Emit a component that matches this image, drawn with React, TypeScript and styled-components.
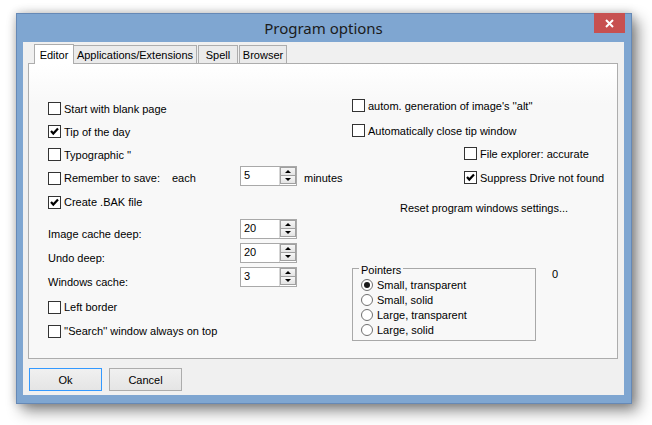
import React from 'react';
import styled, { createGlobalStyle } from 'styled-components';

const GlobalStyle = createGlobalStyle`
  html, body {
    margin: 0;
    padding: 0;
    background: #fff;
  }
  body {
    font-family: "Liberation Sans", Arial, sans-serif;
    font-size: 11px;
    line-height: 14px;
    color: #000;
  }
  * {
    box-sizing: border-box;
  }
`;

const Desk = styled.div`
  width: 652px;
  height: 425px;
  padding: 13px 0 0 16px;
  overflow: hidden;
`;

const Window = styled.div`
  width: 616px;
  height: 391px;
  display: flex;
  flex-direction: column;
  background: #7fa6d1;
  border: 1px solid #6689b6;
  padding: 0 7px 8px 6px;
  box-shadow: 6px 7px 14px rgba(0, 0, 0, 0.45), 0 0 9px rgba(0, 0, 0, 0.22);
`;

const TitleBar = styled.div`
  height: 28px;
  flex: none;
  display: grid;
  grid-template-columns: 1fr auto 1fr;
  align-items: center;
`;

const Title = styled.div`
  grid-column: 2;
  font-family: "Segoe UI", "Noto Sans", sans-serif;
  font-size: 15px;
  color: #1b1b1b;
`;

const CloseButton = styled.div`
  grid-column: 3;
  justify-self: end;
  align-self: start;
  width: 31px;
  height: 20px;
  margin: -1px -1px 0 0;
  background: #c75050;
  display: flex;
  align-items: center;
  justify-content: center;
`;

const Client = styled.div`
  flex: 1;
  background: #f0f0f0;
  padding: 2px 6px 4px 5px;
  display: flex;
  flex-direction: column;
`;

const TabStrip = styled.div`
  height: 19px;
  display: flex;
  align-items: flex-end;
  padding-left: 6px;
`;

const Tab = styled.div<{ $active?: boolean; $w: number }>`
  width: ${(p) => p.$w}px;
  height: ${(p) => (p.$active ? 20 : 18)}px;
  margin-bottom: ${(p) => (p.$active ? -1 : 0)}px;
  margin-right: ${(p) => (p.$active ? -1 : 1)}px;
  border: 1px solid #adadad;
  border-bottom: none;
  background: ${(p) => (p.$active ? '#fff' : '#ebebeb')};
  display: flex;
  align-items: center;
  justify-content: center;
  position: relative;
  z-index: ${(p) => (p.$active ? 1 : 0)};
`;

const Page = styled.div`
  height: 296px;
  border: 1px solid #adadad;
  background: linear-gradient(#fff, #f8f8f8 40px);
  display: grid;
  grid-template-columns: 323px 1fr;
`;

const LeftCol = styled.div`
  padding: 33px 0 0 19px;
  display: flex;
  flex-direction: column;
`;

const RightCol = styled.div`
  padding-top: 28px;
  display: flex;
  flex-direction: column;
`;

const Row = styled.div<{ $h: number; $mt?: number; $indent?: number }>`
  height: ${(p) => p.$h}px;
  margin-top: ${(p) => p.$mt || 0}px;
  padding-left: ${(p) => p.$indent || 0}px;
  display: flex;
  align-items: center;
  white-space: nowrap;
`;

const SpinRow = styled(Row)`
  align-items: flex-start;
`;

const FieldLabel = styled.div<{ $w: number }>`
  width: ${(p) => p.$w}px;
  margin-top: 8px;
`;

const CheckWrap = styled.label<{ $w?: number }>`
  display: flex;
  align-items: center;
  gap: 3px;
  width: ${(p) => (p.$w ? `${p.$w}px` : 'auto')};
`;

const Box = styled.span`
  width: 13px;
  height: 13px;
  border: 1px solid #333;
  background: #fff;
  display: flex;
  align-items: center;
  justify-content: center;
  flex: none;
`;

const Plain = styled.span<{ $w?: number; $ml?: number }>`
  width: ${(p) => (p.$w ? `${p.$w}px` : 'auto')};
  margin-left: ${(p) => p.$ml || 0}px;
`;

const Spin = styled.div<{ $mt?: number }>`
  width: 57px;
  height: 20px;
  margin-top: ${(p) => p.$mt || 0}px;
  border: 1px solid #a9a9a9;
  background: #fff;
  display: flex;
  justify-content: space-between;
  flex: none;
`;

const SpinValue = styled.span`
  padding: 1px 0 0 3px;
`;

const SpinButtons = styled.div`
  width: 17px;
  margin: 0 0 0 0;
  padding: 0 0 1px 0;
  display: flex;
  flex-direction: column;
  border-left: 1px solid #d5d5d5;
`;

const SpinBtn = styled.div`
  flex: 1;
  border: 1px solid #a0a0a0;
  background: linear-gradient(#f6f6f6, #e4e4e4);
  display: flex;
  align-items: center;
  justify-content: center;
  & + & {
    border-top: none;
  }
`;

const Arrow = styled.span<{ $down?: boolean }>`
  width: 0;
  height: 0;
  border-left: 3px solid transparent;
  border-right: 3px solid transparent;
  ${(p) => (p.$down ? 'border-top: 3px solid #000;' : 'border-bottom: 3px solid #000;')}
`;

const GroupRow = styled.div`
  margin-top: 34px;
  display: flex;
  align-items: flex-start;
`;

const Group = styled.fieldset`
  margin: 0;
  width: 184px;
  padding: 1px 0 3px 8px;
  border: 1px solid #a8a8a8;
`;

const Legend = styled.legend`
  padding: 4px 2px 0;
  margin-left: -2px;
  line-height: 12px;
`;

const RadioRow = styled.label`
  height: 15px;
  display: flex;
  align-items: center;
  gap: 4px;
`;

const RadioCircle = styled.span<{ $on?: boolean }>`
  width: 12px;
  height: 12px;
  border-radius: 50%;
  border: 1px solid #6f6f6f;
  background: #fff;
  display: flex;
  align-items: center;
  justify-content: center;
  flex: none;
  &::after {
    content: '';
    width: 6px;
    height: 6px;
    border-radius: 50%;
    background: ${(p) => (p.$on ? '#1a1a1a' : 'transparent')};
  }
`;

const Zero = styled.div`
  margin-left: 16px;
  padding-top: 7px;
`;

const ButtonRow = styled.div`
  margin-top: 9px;
  padding-left: 1px;
  display: flex;
  gap: 7px;
`;

const Button = styled.div<{ $default?: boolean }>`
  width: 73px;
  height: 23px;
  border: 1px solid ${(p) => (p.$default ? '#3399ff' : '#acacac')};
  background: linear-gradient(#f0f0f0, #e5e5e5);
  display: flex;
  align-items: center;
  justify-content: center;
`;

function CheckBox({ label, checked, w }: { label: string; checked?: boolean; w?: number }) {
  return (
    <CheckWrap $w={w}>
      <Box>
        {checked && (
          <svg width="11" height="11" viewBox="0 0 11 11">
            <polyline points="2,5 4.3,7.6 9,2.6" fill="none" stroke="#000" strokeWidth="2.2" />
          </svg>
        )}
      </Box>
      <span>{label}</span>
    </CheckWrap>
  );
}

function SpinBox({ value, mt }: { value: string; mt?: number }) {
  return (
    <Spin $mt={mt}>
      <SpinValue>{value}</SpinValue>
      <SpinButtons>
        <SpinBtn>
          <Arrow />
        </SpinBtn>
        <SpinBtn>
          <Arrow $down />
        </SpinBtn>
      </SpinButtons>
    </Spin>
  );
}

const pointers = ['Small, transparent', 'Small, solid', 'Large, transparent', 'Large, solid'];

export default function App() {
  return (
    <Desk>
      <GlobalStyle />
      <Window>
        <TitleBar>
          <Title>Program options</Title>
          <CloseButton>
            <svg width="9" height="9" viewBox="0 0 9 9">
              <path d="M1 1 L8 8 M8 1 L1 8" stroke="#fff" strokeWidth="2" />
            </svg>
          </CloseButton>
        </TitleBar>
        <Client>
          <TabStrip>
            <Tab $active $w={40}>Editor</Tab>
            <Tab $w={124}>Applications/Extensions</Tab>
            <Tab $w={40}>Spell</Tab>
            <Tab $w={48}>Browser</Tab>
          </TabStrip>
          <Page>
            <LeftCol>
              <Row $h={23}>
                <CheckBox label="Start with blank page" />
              </Row>
              <Row $h={23}>
                <CheckBox label="Tip of the day" checked />
              </Row>
              <Row $h={23}>
                <CheckBox label="Typographic ''" />
              </Row>
              <Row $h={24}>
                <CheckBox label="Remember to save:" w={124} />
                <Plain $w={68}>each</Plain>
                <SpinBox value="5" mt={-4} />
                <Plain $ml={7}>minutes</Plain>
              </Row>
              <Row $h={24}>
                <CheckBox label="Create .BAK file" checked />
              </Row>
              <SpinRow $h={24} $mt={5}>
                <FieldLabel $w={192}>Image cache deep:</FieldLabel>
                <SpinBox value="20" />
              </SpinRow>
              <SpinRow $h={24}>
                <FieldLabel $w={192}>Undo deep:</FieldLabel>
                <SpinBox value="20" />
              </SpinRow>
              <SpinRow $h={24}>
                <FieldLabel $w={192}>Windows cache:</FieldLabel>
                <SpinBox value="3" />
              </SpinRow>
              <Row $h={24} $mt={4}>
                <CheckBox label="Left border" />
              </Row>
              <Row $h={24}>
                <CheckBox label="''Search'' window always on top" />
              </Row>
            </LeftCol>
            <RightCol>
              <Row $h={27}>
                <CheckBox label="autom. generation of image's ''alt''" />
              </Row>
              <Row $h={23}>
                <CheckBox label="Automatically close tip window" />
              </Row>
              <Row $h={23} $indent={112}>
                <CheckBox label="File explorer: accurate" />
              </Row>
              <Row $h={25} $indent={112}>
                <CheckBox label="Suppress Drive not found" checked />
              </Row>
              <Row $h={36} $indent={48}>
                Reset program windows settings...
              </Row>
              <GroupRow>
                <Group>
                  <Legend>Pointers</Legend>
                  {pointers.map((p, i) => (
                    <RadioRow key={p}>
                      <RadioCircle $on={i === 0} />
                      <span>{p}</span>
                    </RadioRow>
                  ))}
                </Group>
                <Zero>0</Zero>
              </GroupRow>
            </RightCol>
          </Page>
          <ButtonRow>
            <Button $default>Ok</Button>
            <Button>Cancel</Button>
          </ButtonRow>
        </Client>
      </Window>
    </Desk>
  );
}
